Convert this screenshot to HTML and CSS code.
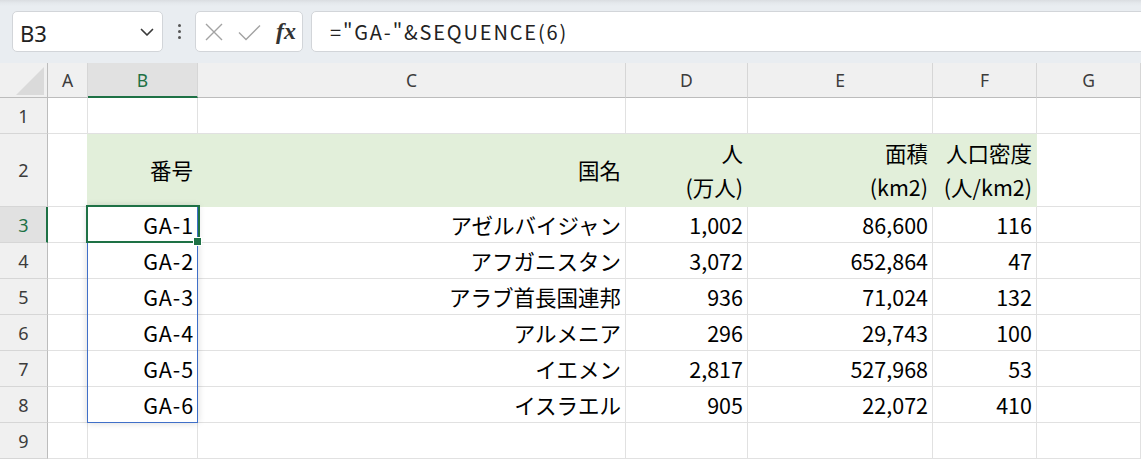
FILE: index.html
```html
<!DOCTYPE html>
<html lang="ja">
<head>
<meta charset="utf-8">
<title>Sheet</title>
<link rel="stylesheet" href="styles.css">
</head>
<body>
<div class="toolbar">
  <div class="namebox">
    <span class="ref">B3</span>
    <svg class="chev" width="14" height="9" viewBox="0 0 14 9"><polyline points="1.5,1.5 7,7 12.5,1.5" fill="none" stroke="#3a3a3a" stroke-width="1.7" stroke-linecap="round" stroke-linejoin="round"/></svg>
  </div>
  <div class="dots"><i></i><i></i><i></i></div>
  <div class="fnbox">
    <svg class="ico-x" width="18" height="18" viewBox="0 0 18 18"><path d="M1 1 L17 17 M17 1 L1 17" stroke="#a3a3a3" stroke-width="1.4" fill="none"/></svg>
    <svg class="ico-check" width="23" height="17" viewBox="0 0 23 17"><polyline points="1,8.5 8,15.5 22,1.5" fill="none" stroke="#a3a3a3" stroke-width="1.4"/></svg>
    <span class="fx">fx</span>
  </div>
  <div class="formula">="GA-"&amp;SEQUENCE(6)</div>
</div>

<div class="sheet">
  <!-- header row -->
  <div class="corner"><svg width="28" height="28" viewBox="0 0 28 28"><polygon points="28,0 28,28 0,28" fill="#dadada"/></svg></div>
  <div class="ch">A</div>
  <div class="ch sel">B</div>
  <div class="ch">C</div>
  <div class="ch">D</div>
  <div class="ch">E</div>
  <div class="ch">F</div>
  <div class="ch">G</div>

  <!-- row 1 -->
  <div class="rh">1</div>
  <div class="c"></div><div class="c"></div><div class="c"></div><div class="c"></div><div class="c"></div><div class="c"></div><div class="c"></div>

  <!-- row 2 -->
  <div class="rh">2</div>
  <div class="c a2"></div>
  <div class="c fill">番号</div>
  <div class="c fill">国名</div>
  <div class="c fill two"><span>人</span><span>(万人)</span></div>
  <div class="c fill two"><span>面積</span><span>(km2)</span></div>
  <div class="c fill two"><span>人口密度</span><span>(人/km2)</span></div>
  <div class="c"></div>

  <!-- row 3 -->
  <div class="rh sel">3</div>
  <div class="c"></div>
  <div class="c code active-cell">GA-1<span class="spill"></span><span class="active"></span><span class="handle"></span></div>
  <div class="c">アゼルバイジャン</div>
  <div class="c">1,002</div>
  <div class="c">86,600</div>
  <div class="c">116</div>
  <div class="c"></div>

  <!-- row 4 -->
  <div class="rh">4</div>
  <div class="c"></div>
  <div class="c code">GA-2</div>
  <div class="c">アフガニスタン</div>
  <div class="c">3,072</div>
  <div class="c">652,864</div>
  <div class="c">47</div>
  <div class="c"></div>

  <!-- row 5 -->
  <div class="rh">5</div>
  <div class="c"></div>
  <div class="c code">GA-3</div>
  <div class="c">アラブ首長国連邦</div>
  <div class="c">936</div>
  <div class="c">71,024</div>
  <div class="c">132</div>
  <div class="c"></div>

  <!-- row 6 -->
  <div class="rh">6</div>
  <div class="c"></div>
  <div class="c code">GA-4</div>
  <div class="c">アルメニア</div>
  <div class="c">296</div>
  <div class="c">29,743</div>
  <div class="c">100</div>
  <div class="c"></div>

  <!-- row 7 -->
  <div class="rh">7</div>
  <div class="c"></div>
  <div class="c code">GA-5</div>
  <div class="c">イエメン</div>
  <div class="c">2,817</div>
  <div class="c">527,968</div>
  <div class="c">53</div>
  <div class="c"></div>

  <!-- row 8 -->
  <div class="rh">8</div>
  <div class="c"></div>
  <div class="c code">GA-6</div>
  <div class="c">イスラエル</div>
  <div class="c">905</div>
  <div class="c">22,072</div>
  <div class="c">410</div>
  <div class="c"></div>

  <!-- row 9 -->
  <div class="rh">9</div>
  <div class="c"></div><div class="c"></div><div class="c"></div><div class="c"></div><div class="c"></div><div class="c"></div><div class="c"></div>
</div>
</body>
</html>
```

FILE: styles.css
```css
html, body {
  margin: 0;
  padding: 0;
}
body {
  width: 1141px;
  height: 459px;
  overflow: hidden;
  background: #ffffff;
  font-family: "Noto Sans CJK JP", "Noto Sans", sans-serif;
  color: #000;
}

/* ---------- formula toolbar ---------- */
.toolbar {
  height: 63px;
  box-sizing: border-box;
  background: linear-gradient(#dadde1 0, #e4e8ec 3px, #e9edf1 6px);
  display: flex;
  align-items: flex-start;
  padding: 11px 0 0 12px;
}
.namebox {
  width: 151px;
  height: 41px;
  box-sizing: border-box;
  border: 1px solid #d2d5d9;
  border-radius: 5px;
  background: #fff;
  display: flex;
  align-items: center;
  justify-content: space-between;
  padding: 0 8px 0 7px;
}
.ref {
  font-family: "Noto Sans", sans-serif;
  font-size: 22px;
  color: #222;
  line-height: 1;
  margin-top: 2px;
}
.chev {
  margin-top: 2px;
}
.dots {
  width: 32px;
  height: 41px;
  display: flex;
  flex-direction: column;
  align-items: center;
  justify-content: center;
  gap: 3px;
}
.dots i {
  display: block;
  width: 3px;
  height: 3px;
  border-radius: 50%;
  background: #555;
}
.fnbox {
  width: 108px;
  height: 41px;
  box-sizing: border-box;
  border: 1px solid #d2d5d9;
  border-radius: 5px;
  background: #fff;
  display: flex;
  align-items: center;
  padding-left: 9px;
}
.ico-x {
  margin-top: 1px;
}
.ico-check {
  margin-left: 15px;
  margin-top: 1px;
}
.fx {
  margin-left: 15px;
  font-family: "Liberation Serif", "DejaVu Serif", serif;
  font-style: italic;
  font-weight: bold;
  font-size: 24px;
  color: #333;
  line-height: 1;
  margin-top: -2px;
}
.formula {
  flex: 1;
  height: 41px;
  box-sizing: border-box;
  margin-left: 8px;
  margin-right: -10px;
  border: 1px solid #d2d5d9;
  border-radius: 5px;
  background: #fff;
  display: flex;
  align-items: center;
  padding-left: 18px;
  font-size: 20px;
  letter-spacing: 1.85px;
  color: #222;
}

/* ---------- grid ---------- */
.sheet {
  display: grid;
  grid-template-columns: 48px 40px 110px 428px 122px 185px 104px 1fr;
  grid-template-rows: 35px 36px 73px repeat(7, 36px);
}
.corner {
  background: #f0f0f0;
  border-right: 1px solid #bcbcbc;
  border-bottom: 1px solid #bcbcbc;
  box-sizing: border-box;
  display: flex;
  align-items: flex-end;
  justify-content: flex-end;
  padding: 0 3px 2px 0;
}
.ch {
  background: #f0f0f0;
  border-right: 1px solid #d6d6d6;
  border-bottom: 1px solid #bcbcbc;
  box-sizing: border-box;
  display: flex;
  align-items: center;
  justify-content: center;
  font-family: "Noto Sans", sans-serif;
  font-size: 17.5px;
  color: #3c3c3c;
}
.ch.sel {
  background: #e1e1e1;
  border-bottom: 2px solid #1e7145;
  color: #1e7145;
  padding-top: 1px;
}
.rh {
  background: #f0f0f0;
  border-right: 1px solid #bcbcbc;
  border-bottom: 1px solid #d6d6d6;
  box-sizing: border-box;
  display: flex;
  align-items: center;
  justify-content: center;
  font-family: "Noto Sans", sans-serif;
  font-size: 18px;
  color: #3c3c3c;
}
.rh.sel {
  background: #e1e1e1;
  border-right: 2px solid #1e7145;
  color: #1e7145;
  padding-left: 1px;
}
.c {
  border-right: 1px solid #e1e1e1;
  border-bottom: 1px solid #e1e1e1;
  box-sizing: border-box;
  display: flex;
  align-items: center;
  justify-content: flex-end;
  padding-right: 4px;
  font-size: 21.5px;
  line-height: 1;
  white-space: nowrap;
}
.c.code {
  letter-spacing: 0.9px;
  padding-right: 3px;
}
.c.a2 {
  border-right-color: #e2efda;
}
.c.fill {
  background: #e2efda;
  border-right-color: #e2efda;
  border-bottom-color: #e2efda;
}
.c.two {
  flex-direction: column;
  align-items: flex-end;
  justify-content: center;
  line-height: 34px;
}

/* ---------- selection overlays ---------- */
.active-cell {
  position: relative;
}
.spill {
  position: absolute;
  left: -1px;
  top: -1px;
  width: 111px;
  height: 217px;
  box-sizing: border-box;
  border: 1px solid #3f6fc8;
  box-shadow: 0 0 7px rgba(0, 0, 0, 0.16);
}
.active {
  position: absolute;
  left: -2px;
  top: -2px;
  width: 114px;
  height: 38px;
  box-sizing: border-box;
  border: 2px solid #1e7145;
}
.handle {
  position: absolute;
  left: 106px;
  top: 31px;
  width: 7px;
  height: 7px;
  box-sizing: border-box;
  background: #1e7145;
  outline: 1px solid #fff;
}
```
